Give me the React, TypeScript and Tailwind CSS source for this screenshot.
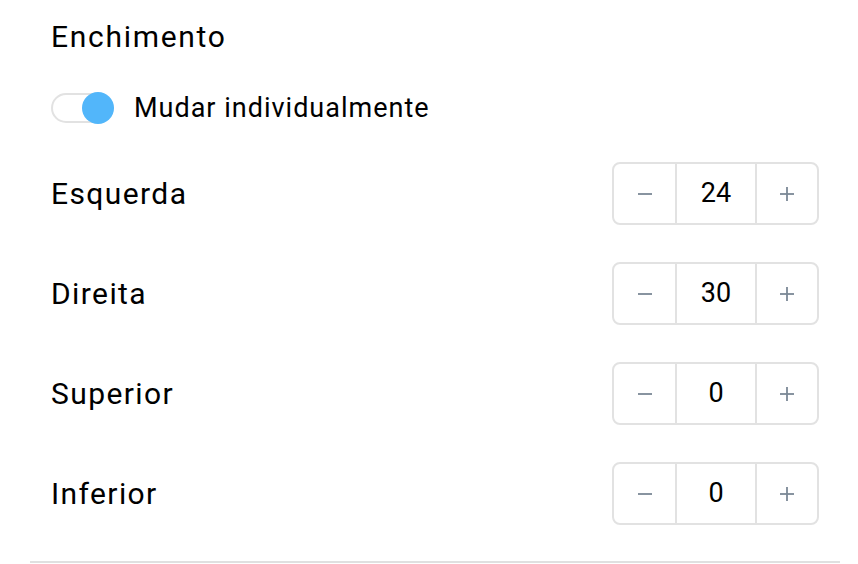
import React from "react";

function Minus() {
  return (
    <svg width="16" height="16" viewBox="0 0 16 16">
      <line x1="1" y1="8" x2="15" y2="8" stroke="#7b8896" strokeWidth="1.8" />
    </svg>
  );
}
function Plus() {
  return (
    <svg width="16" height="16" viewBox="0 0 16 16">
      <line x1="1" y1="8" x2="15" y2="8" stroke="#7b8896" strokeWidth="1.8" />
      <line x1="8" y1="1" x2="8" y2="15" stroke="#7b8896" strokeWidth="1.8" />
    </svg>
  );
}

function Stepper({ value }: { value: number }) {
  return (
    <div className="flex h-[63px] w-[207px] rounded-[8px] border-2 border-[#e2e2e2] bg-white">
      <div className="flex w-[63px] items-center justify-center border-r-2 border-[#e2e2e2]">
        <Minus />
      </div>
      <div className="flex w-[78px] items-center justify-center text-[27px] text-black">
        {value}
      </div>
      <div className="flex flex-1 items-center justify-center border-l-2 border-[#e2e2e2]">
        <Plus />
      </div>
    </div>
  );
}

export default function App() {
  const rows = [
    { label: "Esquerda", value: 24 },
    { label: "Direita", value: 30 },
    { label: "Superior", value: 0 },
    { label: "Inferior", value: 0 },
  ];
  return (
    <div
      className="h-[564px] w-[858px] bg-white pl-[30px] pr-[18px] pt-[19px]"
      style={{ fontFamily: "Roboto, sans-serif" }}
    >
      <div className="pl-[21px] pr-[21px]">
        <div className="h-[36px] text-[30px] leading-[36px] tracking-[1.7px] text-black">
          Enchimento
        </div>
        <div className="mt-[37px] flex h-[32px] items-center">
          <div className="relative h-[30px] w-[62px]">
            <div className="absolute inset-0 rounded-full border-2 border-[#e2e2e2] bg-white" />
            <div className="absolute left-[31px] top-[-1px] h-[32px] w-[32px] rounded-full bg-[#52b6fa]" />
          </div>
          <span className="ml-[21px] text-[27px] leading-[32px] tracking-[1px] text-black">
            Mudar individualmente
          </span>
        </div>
        <div className="mt-[38px] flex flex-col gap-[37px]">
          {rows.map((r) => (
            <div key={r.label} className="flex h-[63px] items-center justify-between">
              <span className="text-[30px] tracking-[1.4px] text-black">{r.label}</span>
              <Stepper value={r.value} />
            </div>
          ))}
        </div>
      </div>
      <div className="mt-[36px] h-[2px] bg-[#e0e0e0]" />
    </div>
  );
}
